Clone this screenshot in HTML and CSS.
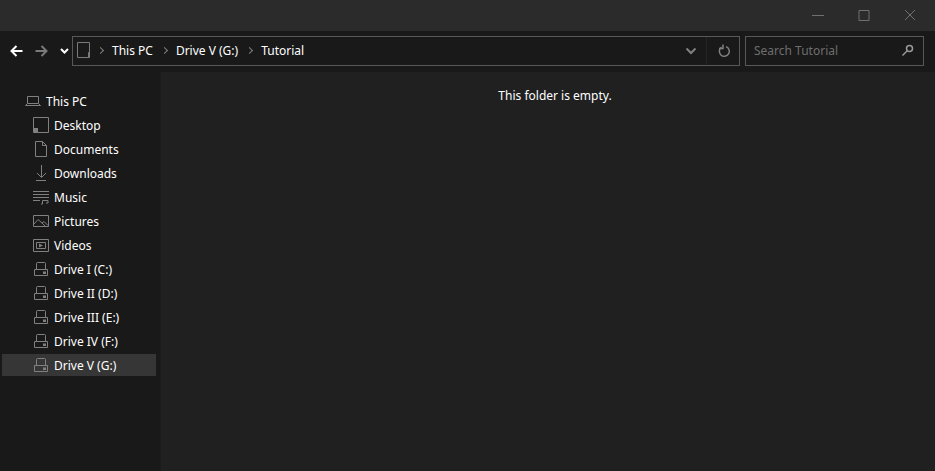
FILE: index.html
```html
<!DOCTYPE html>
<html lang="en">
<head>
<meta charset="utf-8">
<title>Tutorial</title>
<link rel="stylesheet" href="styles.css">
</head>
<body>
<div class="window">
  <header class="titlebar">
    <svg class="cap" width="16" height="16" viewBox="0 0 16 16"><path d="M2 8.5H14" /></svg>
    <svg class="cap" width="16" height="16" viewBox="0 0 16 16"><path d="M3 3.5H13V13.5H3Z" /></svg>
    <svg class="cap" width="16" height="16" viewBox="0 0 16 16"><path d="M3 3L13 13M13 3L3 13" /></svg>
  </header>
  <div class="toolbar">
    <svg class="nav" width="18" height="16" viewBox="0 0 18 16"><path class="white" d="M13.5 8H2.5M7.5 3L2.5 8L7.5 13" /></svg>
    <svg class="nav" width="18" height="16" viewBox="0 0 18 16"><path class="grey" d="M2.500 8H13.500M8.500 3L13.500 8L8.500 13" /></svg>
    <svg class="recent" width="9" height="6" viewBox="0 0 9 6"><path class="white" d="M1 1L4.500 4.500L8 1" /></svg>
    <div class="address">
      <svg class="pc-tiny" width="14" height="17" viewBox="0 0 14 17"><path d="M.5.500H12.500V15.500H.5Z M11.500 15.500V10.500H12.500" /></svg>
      <span class="chev"></span>
      <span class="crumb first">This PC</span>
      <span class="chev"></span>
      <span class="crumb">Drive V (G:)</span>
      <span class="chev"></span>
      <span class="crumb">Tutorial</span>
      <svg class="drop" width="12" height="8" viewBox="0 0 12 8"><path d="M1.500 1.500L6 6L10.500 1.500" /></svg>
      <span class="sep"></span>
      <svg class="refresh" width="14" height="14" viewBox="0 0 14 14"><path d="M4.500 3.200A5 5 0 1 0 9 2.600M6 .5V4.500H2" /></svg>
    </div>
    <div class="search">
      <span class="search-text">Search Tutorial</span>
      <svg class="lens" width="13" height="13" viewBox="0 0 13 13"><circle cx="8.500" cy="4.500" r="3" /><path d="M6 7L1.500 11.500" /></svg>
    </div>
  </div>
  <div class="body">
    <nav class="sidebar">
      <div class="row root">
        <svg class="ic" width="16" height="16" viewBox="0 0 16 16"><path d="M2.500 3.500H13.500V10.500H2.500Z M.5 12.500H15.500L13.500 10.500M.5 12.500L2.500 10.500" /></svg>
        <span>This PC</span>
      </div>
      <div class="row">
        <svg class="ic" width="16" height="16" viewBox="0 0 16 16"><path d="M.5.500H15.500V15.500H.5Z" /><rect class="fill" x="1" y="11" width="4" height="4" /></svg>
        <span>Desktop</span>
      </div>
      <div class="row">
        <svg class="ic" width="16" height="16" viewBox="0 0 16 16"><path d="M2.500.5H9.500L13.500 4.500V15.500H2.500Z M9.500.5V4.500H13.500" /></svg>
        <span>Documents</span>
      </div>
      <div class="row">
        <svg class="ic" width="16" height="16" viewBox="0 0 16 16"><path d="M8.500 0V12M4 8L8.500 12.500L13 8M3 15.500H13" /></svg>
        <span>Downloads</span>
      </div>
      <div class="row">
        <svg class="ic" width="16" height="16" viewBox="0 0 16 16"><path d="M0 2.500H16M0 5.500H16M0 8.500H16M0 11.500H7M9.500 15V11.500H15V14M9.500 15H8M15 14H13" /></svg>
        <span>Music</span>
      </div>
      <div class="row">
        <svg class="ic" width="16" height="16" viewBox="0 0 16 16"><path d="M.5 2.500H15.500V13.500H.5Z M1 11L5 6.500L9 10L11 8.500L15 12.500M9 10L12 13" /></svg>
        <span>Pictures</span>
      </div>
      <div class="row">
        <svg class="ic" width="16" height="16" viewBox="0 0 16 16"><path d="M.5 2.500H15.500V14.500H.5Z M3.500 5.500H12.500V11.500H3.500Z" /><path class="fill" d="M6 6.500L10 8.500L6 10.500Z" /></svg>
        <span>Videos</span>
      </div>
      <div class="row">
        <svg class="ic" width="16" height="16" viewBox="0 0 16 16"><use href="#drive" /></svg>
        <span>Drive I (C:)</span>
      </div>
      <div class="row">
        <svg class="ic" width="16" height="16" viewBox="0 0 16 16"><use href="#drive" /></svg>
        <span>Drive II (D:)</span>
      </div>
      <div class="row">
        <svg class="ic" width="16" height="16" viewBox="0 0 16 16"><use href="#drive" /></svg>
        <span>Drive III (E:)</span>
      </div>
      <div class="row">
        <svg class="ic" width="16" height="16" viewBox="0 0 16 16"><use href="#drive" /></svg>
        <span>Drive IV (F:)</span>
      </div>
      <div class="row active">
        <svg class="ic" width="16" height="16" viewBox="0 0 16 16"><use href="#drive" /></svg>
        <span>Drive V (G:)</span>
      </div>
    </nav>
    <main class="content">
      <p class="empty">This folder is empty.</p>
    </main>
  </div>
</div>
<svg class="defs" width="0" height="0">
  <defs>
    <g id="drive">
      <path d="M3.500 8.500V2.500Q3.500 1.500 4.500 1.500H11.500Q12.500 1.500 12.500 2.500V8.500M1.500 8.500H14.500V14.500H1.500Z" />
      <rect class="fill" x="10" y="10.500" width="3" height="2.500" />
    </g>
  </defs>
</svg>
</body>
</html>
```
FILE: styles.css
```css
* { box-sizing: border-box; }
html, body { margin: 0; height: 100%; }
body {
  background: #191919;
  color: #fff;
  font-family: "Noto Sans", "Open Sans", sans-serif;
  font-size: 12px;
  overflow: hidden;
}
svg { display: block; flex: none; fill: none; stroke: #808080; stroke-width: 1; }
.defs { position: absolute; }
.fill { fill: #808080; stroke: none; }
.window { height: 471px; display: flex; flex-direction: column; }

.titlebar {
  height: 31px;
  background: #2b2b2b;
  display: flex;
  justify-content: flex-end;
  align-items: flex-start;
  gap: 30px;
  padding: 7px 17px 0 0;
}
.cap { stroke: #707070; }

.toolbar {
  height: 41px;
  background: #191919;
  display: flex;
  align-items: center;
  padding: 0 3px 2px 9px;
}
.nav { margin-right: 5px; }
.nav + .nav { margin-left: 1px; margin-right: 9px; }
.nav path { stroke-width: 2; }
.white { stroke: #fff; stroke-width: 2; }
.grey { stroke: #7a7a7a; }
.recent { margin-right: 3px; }

.address, .search {
  height: 30px;
  border: 1px solid #585858;
  background: #191919;
  display: flex;
  align-items: center;
}
.address { width: 668px; padding-left: 4px; }
.pc-tiny { stroke: #7a7a7a; margin-right: 7px; }
.chev {
  width: 5px;
  height: 5px;
  border-top: 1px solid #808080;
  border-right: 1px solid #808080;
  transform: rotate(45deg);
  margin-right: 9px;
  flex: none;
}
.crumb { margin-right: 9px; line-height: 28px; }
.drop { margin-left: auto; stroke: #808080; stroke-width: 2; margin-right: 9px; }
.sep { width: 1px; height: 28px; background: #252525; }
.refresh { stroke: #808080; stroke-width: 1.500; margin: 0 8px 0 10px; }

.search {
  width: 179px;
  margin-left: 5px;
  padding: 0 9px 0 8px;
  justify-content: space-between;
}
.search-text { color: #6e6e6e; }
.lens { stroke: #9a9a9a; stroke-width: 1.500; }

.body { flex: 1; display: flex; min-height: 0; }
.sidebar {
  width: 157px;
  padding: 18px 1px 0 2px;
  display: flex;
  flex-direction: column;
  gap: 2px;
  background: #191919;
}
.row {
  height: 22px;
  display: flex;
  align-items: center;
  gap: 5px;
  padding-left: 31px;
  color: #fff;
}
.row.root { padding-left: 23px; }
.row.active { background: #363636; }

.content {
  flex: 1;
  margin-left: 3px;
  background: #202020;
  border-left: 1px solid #1c1c1c;
  padding: 16px 0 0 14px;
  text-align: center;
}
.empty { margin: 0; line-height: 16px; }
```
